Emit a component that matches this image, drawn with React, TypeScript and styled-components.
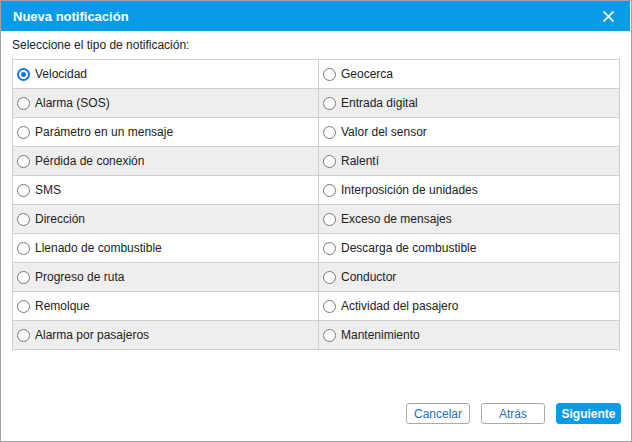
import React, { useState } from "react";
import styled, { createGlobalStyle } from "styled-components";

const GlobalStyles = createGlobalStyle`
  html, body {
    margin: 0;
    padding: 0;
    background: #ffffff;
  }
  *, *:before, *:after {
    box-sizing: border-box;
  }
`;

const OPTIONS: [string, string][] = [
  ["Velocidad", "Geocerca"],
  ["Alarma (SOS)", "Entrada digital"],
  ["Parámetro en un mensaje", "Valor del sensor"],
  ["Pérdida de conexión", "Ralentí"],
  ["SMS", "Interposición de unidades"],
  ["Dirección", "Exceso de mensajes"],
  ["Llenado de combustible", "Descarga de combustible"],
  ["Progreso de ruta", "Conductor"],
  ["Remolque", "Actividad del pasajero"],
  ["Alarma por pasajeros", "Mantenimiento"],
];

export default function App() {
  const [selected, setSelected] = useState("Velocidad");

  return (
    <Dialog>
      <GlobalStyles />
      <Header>
        <Title>Nueva notificación</Title>
        <CloseButton aria-label="Cerrar">
          <svg width="11" height="11" viewBox="0 0 11 11">
            <path d="M0.5 0.5 L10.5 10.5 M10.5 0.5 L0.5 10.5" stroke="#fff" strokeWidth="1.7" />
          </svg>
        </CloseButton>
      </Header>
      <Body>
        <Prompt>Seleccione el tipo de notificación:</Prompt>
        <Table>
          <colgroup>
            <col style={{ width: 306 }} />
            <col />
          </colgroup>
          <tbody>
            {OPTIONS.map((pair, i) => (
              <Row key={i} $striped={i % 2 === 1}>
                {pair.map((label) => (
                  <Cell key={label}>
                    <Option>
                      <Radio
                        type="radio"
                        name="type"
                        checked={selected === label}
                        onChange={() => setSelected(label)}
                      />
                      {label}
                    </Option>
                  </Cell>
                ))}
              </Row>
            ))}
          </tbody>
        </Table>
      </Body>
      <Footer>
        <Button>Cancelar</Button>
        <Button>Atrás</Button>
        <Button $primary>Siguiente</Button>
      </Footer>
    </Dialog>
  );
}

const Dialog = styled.div`
  width: 632px;
  height: 442px;
  border: 1px solid #a3a3a3;
  display: flex;
  flex-direction: column;
  background: #fff;
  font-family: "Liberation Sans", Arial, sans-serif;
  color: #222;
`;

const Header = styled.div`
  height: 30px;
  background: #0a9be8;
  display: flex;
  align-items: center;
  justify-content: space-between;
  padding: 0 16px 0 12px;
  margin-right: 1px;
`;

const Title = styled.div`
  color: #fff;
  font-size: 13px;
  font-weight: bold;
`;

const CloseButton = styled.button`
  border: none;
  background: transparent;
  padding: 0;
  display: flex;
  cursor: pointer;
`;

const Body = styled.div`
  padding: 7px 11px 0 11px;
`;

const Prompt = styled.div`
  font-size: 12px;
  line-height: 14px;
  margin-bottom: 7px;
`;

const Table = styled.table`
  width: 608px;
  border-collapse: collapse;
  table-layout: fixed;
`;

const Row = styled.tr<{ $striped: boolean }>`
  background: ${(p) => (p.$striped ? "#eeeeee" : "#ffffff")};
`;

const Cell = styled.td`
  border: 1px solid #cfcfcf;
  height: 29px;
  padding: 0 0 0 4px;
`;

const Option = styled.label`
  display: flex;
  align-items: center;
  gap: 5px;
  font-size: 12px;
  cursor: pointer;
`;

const Radio = styled.input`
  appearance: none;
  margin: 0;
  width: 13px;
  height: 13px;
  border-radius: 50%;
  border: 1px solid #777;
  background: #fff;
  display: grid;
  place-items: center;

  &:checked {
    border: 2px solid #1a73e8;
  }
  &:checked::after {
    content: "";
    width: 5px;
    height: 5px;
    border-radius: 50%;
    background: #1a73e8;
  }
`;

const Footer = styled.div`
  margin-top: auto;
  display: flex;
  justify-content: flex-end;
  gap: 11px;
  padding: 0 10px 17px 0;
`;

const Button = styled.button<{ $primary?: boolean }>`
  width: ${(p) => (p.$primary ? "65px" : "64px")};
  height: 21px;
  padding: 0;
  border-radius: 3px;
  font-family: "Liberation Sans", Arial, sans-serif;
  font-size: 12px;
  cursor: pointer;
  border: 1px solid ${(p) => (p.$primary ? "#0a9be8" : "#a9a9a9")};
  background: ${(p) => (p.$primary ? "#0a9be8" : "#fff")};
  color: ${(p) => (p.$primary ? "#fff" : "#1d6fb8")};
  font-weight: ${(p) => (p.$primary ? "bold" : "normal")};
`;
